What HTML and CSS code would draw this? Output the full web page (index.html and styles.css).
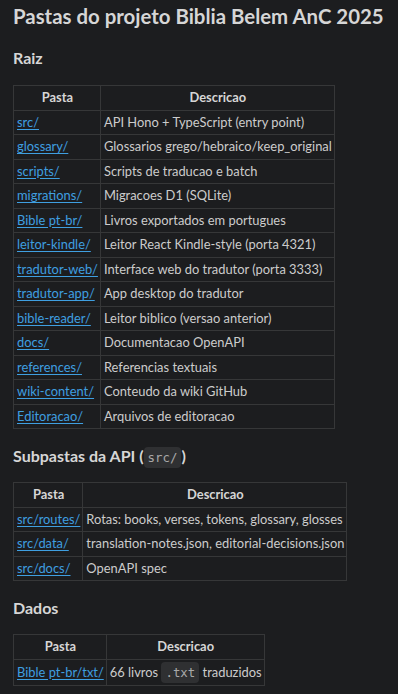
FILE: index.html
```html
<!DOCTYPE html>
<html lang="pt">
<head>
<meta charset="utf-8">
<link rel="stylesheet" href="styles.css">
</head>
<body>
<main class="doc">
  <h1 class="title">Pastas do projeto Biblia Belem AnC 2025</h1>

  <h2 class="section first">Raiz</h2>
  <table class="grid">
    <thead><tr><th>Pasta</th><th>Descricao</th></tr></thead>
    <tbody>
      <tr><td><a href="#">src/</a></td><td>API Hono + TypeScript (entry point)</td></tr>
      <tr><td><a href="#">glossary/</a></td><td>Glossarios grego/hebraico/keep_original</td></tr>
      <tr><td><a href="#">scripts/</a></td><td>Scripts de traducao e batch</td></tr>
      <tr><td><a href="#">migrations/</a></td><td>Migracoes D1 (SQLite)</td></tr>
      <tr><td><a href="#">Bible pt-br/</a></td><td>Livros exportados em portugues</td></tr>
      <tr><td><a href="#">leitor-kindle/</a></td><td>Leitor React Kindle-style (porta 4321)</td></tr>
      <tr><td><a href="#">tradutor-web/</a></td><td>Interface web do tradutor (porta 3333)</td></tr>
      <tr><td><a href="#">tradutor-app/</a></td><td>App desktop do tradutor</td></tr>
      <tr><td><a href="#">bible-reader/</a></td><td>Leitor biblico (versao anterior)</td></tr>
      <tr><td><a href="#">docs/</a></td><td>Documentacao OpenAPI</td></tr>
      <tr><td><a href="#">references/</a></td><td>Referencias textuais</td></tr>
      <tr><td><a href="#">wiki-content/</a></td><td>Conteudo da wiki GitHub</td></tr>
      <tr><td><a href="#">Editoracao/</a></td><td>Arquivos de editoracao</td></tr>
    </tbody>
  </table>

  <h2 class="section">Subpastas da API (<code class="code">src/</code>)</h2>
  <table class="grid">
    <thead><tr><th>Pasta</th><th>Descricao</th></tr></thead>
    <tbody>
      <tr><td><a href="#">src/routes/</a></td><td>Rotas: books, verses, tokens, glossary, glosses</td></tr>
      <tr><td><a href="#">src/data/</a></td><td>translation-notes.json, editorial-decisions.json</td></tr>
      <tr><td><a href="#">src/docs/</a></td><td>OpenAPI spec</td></tr>
    </tbody>
  </table>

  <h2 class="section">Dados</h2>
  <table class="grid">
    <thead><tr><th>Pasta</th><th>Descricao</th></tr></thead>
    <tbody>
      <tr><td><a href="#">Bible pt-br/txt/</a></td><td class="has-code">66 livros <code class="code">.txt</code> traduzidos</td></tr>
    </tbody>
  </table>
</main>
</body>
</html>
```
FILE: styles.css
```css
html, body {
  margin: 0;
  padding: 0;
  background: #1c1d1f;
}
body {
  color: #cccccc;
  font-family: Lato, "Liberation Sans", sans-serif;
  font-size: 12.9px;
}
.doc {
  padding: 0 13px;
  display: flow-root;
}
.title {
  margin: 3px 0 0;
  font-size: 20.4px;
  line-height: 26px;
  font-weight: 700;
  color: #d6d6d6;
}
.section {
  margin: 17px 0 16px;
  font-size: 16px;
  line-height: 20px;
  font-weight: 700;
  color: #d6d6d6;
}
.section.first {
  margin: 19px 0 17px;
}
.grid {
  border-collapse: collapse;
  margin: 0;
}
.grid th,
.grid td {
  border: 1px solid #363738;
  padding: 2px 2px 2px 3px;
  line-height: 19.5px;
  text-align: left;
  white-space: nowrap;
}
.grid td.has-code {
  padding-top: 3px;
  padding-bottom: 3px;
}
.grid th {
  text-align: center;
  font-weight: 700;
  color: #d6d6d6;
}
.grid a {
  color: #3f9fe0;
  text-decoration: underline;
  text-underline-offset: 2px;
}
.code {
  font-family: "DejaVu Sans Mono", monospace;
  font-size: 12.4px;
  line-height: 1;
  font-weight: 400;
  color: #a9a9a9;
  background: #2f3032;
  border-radius: 4px;
  padding: 3px 4px;
}
```
